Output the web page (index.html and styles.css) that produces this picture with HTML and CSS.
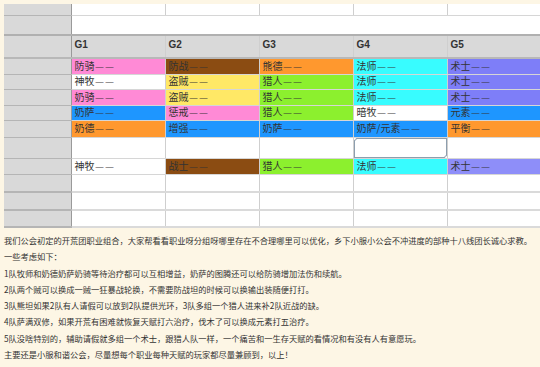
FILE: index.html
```html
<!DOCTYPE html>
<html lang="zh">
<head>
<meta charset="utf-8">
<link rel="stylesheet" href="styles.css">
</head>
<body>
<div class="page">
  <div class="sheet">
    <table class="grid">
      <colgroup>
        <col class="c-side"><col class="c-g"><col class="c-g"><col class="c-g"><col class="c-g"><col class="c-g">
      </colgroup>
      <tr class="r1"><td class="side"></td><td></td><td></td><td></td><td></td><td></td></tr>
      <tr class="r2"><td class="side"></td><td colspan="5"></td></tr>
      <tr class="rh"><td class="side"></td><th>G1</th><th>G2</th><th>G3</th><th>G4</th><th>G5</th></tr>
      <tr class="rc"><td class="side"></td><td class="pink">防骑<span class="dash">——</span></td><td class="brown">防战<span class="dash">——</span></td><td class="orange">熊德<span class="dash">——</span></td><td class="cyan">法师<span class="dash">——</span></td><td class="purple">术士<span class="dash">——</span></td></tr>
      <tr class="rc"><td class="side"></td><td>神牧<span class="dash">——</span></td><td class="yellow">盗贼<span class="dash">——</span></td><td class="green">猎人<span class="dash">——</span></td><td class="cyan">法师<span class="dash">——</span></td><td class="purple">术士<span class="dash">——</span></td></tr>
      <tr class="rc"><td class="side"></td><td class="pink">奶骑<span class="dash">——</span></td><td class="yellow">盗贼<span class="dash">——</span></td><td class="green">猎人<span class="dash">——</span></td><td class="cyan">法师<span class="dash">——</span></td><td class="purple">术士<span class="dash">——</span></td></tr>
      <tr class="rc"><td class="side"></td><td class="blue">奶萨<span class="dash">——</span></td><td class="pink">惩戒<span class="dash">——</span></td><td class="green">猎人<span class="dash">——</span></td><td>暗牧<span class="dash">——</span></td><td class="blue">元素<span class="dash">——</span></td></tr>
      <tr class="rc re"><td class="side"></td><td class="orange">奶德<span class="dash">——</span></td><td class="blue">增强<span class="dash">——</span></td><td class="blue">奶萨<span class="dash">——</span></td><td class="blue">奶萨/元素<span class="dash">——</span></td><td class="orange">平衡<span class="dash">——</span></td></tr>
      <tr class="rf"><td class="side"></td><td></td><td></td><td></td><td class="selected"><span class="handle tl"></span><span class="handle br"></span></td><td></td></tr>
      <tr class="rc"><td class="side"></td><td>神牧<span class="dash">——</span></td><td class="brown">战士<span class="dash">——</span></td><td class="green">猎人<span class="dash">——</span></td><td class="cyan">法师<span class="dash">——</span></td><td class="purple2">术士<span class="dash">——</span></td></tr>
      <tr class="rb1"><td class="side"></td><td></td><td></td><td></td><td></td><td></td></tr>
      <tr class="rb2"><td class="side"></td><td></td><td></td><td></td><td></td><td></td></tr>
      <tr class="rb2"><td class="side"></td><td></td><td></td><td></td><td></td><td></td></tr>
    </table>
  </div>
  <div class="notes">
    <p>我们公会初定的开荒团职业组合，大家帮看看职业呀分组呀哪里存在不合理哪里可以优化，乡下小服小公会不冲进度的部种十八线团长诚心求教。</p>
    <p>一些考虑如下：</p>
    <p>1队牧师和奶德奶萨奶骑等待治疗都可以互相增益，奶萨的图腾还可以给防骑增加法伤和续航。</p>
    <p>2队两个贼可以换成一贼一狂暴战轮换，不需要防战坦的时候可以换输出装随便打打。</p>
    <p>3队熊坦如果2队有人请假可以放到2队提供光环，3队多组一个猎人进来补2队近战的缺。</p>
    <p>4队萨满双修，如果开荒有困难就恢复天赋打六治疗，伐木了可以换成元素打五治疗。</p>
    <p>5队没啥特别的，辅助请假就多组一个术士，跟猎人队一样，一个痛苦和一生存天赋的看情况和有没有人有意愿玩。</p>
    <p>主要还是小服和谐公会，尽量想每个职业每种天赋的玩家都尽量兼顾到，以上！</p>
  </div>
</div>
</body>
</html>
```

FILE: styles.css
```css
html, body {
  margin: 0;
  padding: 0;
  background: #fdf6e5;
  overflow: hidden;
}
.page {
  width: 540px;
  height: 367px;
  padding: 4px 0 0 4px;
  box-sizing: border-box;
  font-family: "Noto Sans CJK SC", "Liberation Sans", sans-serif;
  color: #333;
}
.sheet {
  width: 536px;
  overflow: hidden;
}
.grid {
  border-collapse: collapse;
  table-layout: fixed;
  width: 537px;
  background: #fff;
}
.c-side { width: 67px; }
.c-g { width: 94px; }
.grid td, .grid th {
  padding: 0 0 0 3px;
  font-size: 10px;
  line-height: 12px;
  border-left: 1px solid #cfcfcf;
  border-right: 1px solid #cfcfcf;
  border-bottom: 1px solid #d6d6d6;
  white-space: nowrap;
  overflow: hidden;
  text-align: left;
  vertical-align: middle;
  color: #333;
}
.dash {
  display: inline-block;
  font-family: "Liberation Sans", sans-serif;
  font-size: 8px;
  letter-spacing: 2px;
  margin-left: 1px;
  vertical-align: 1px;
}
.grid td.side {
  background: #d9d9d9;
  border-left: none;
  border-right: 1px solid #9a9a9a;
  border-bottom: 1px solid #b5b5b5;
}
.r1 td { height: 11px; }
.r2 td { height: 18px; border-bottom: 2px solid #b0b0b0; }
.r2 td.side { border-bottom: 2px solid #b0b0b0; }
.rh th, .rh td { height: 18px; background: #d9d9d9; }
.rh th {
  font-family: "Liberation Sans", sans-serif;
  font-weight: bold;
  font-size: 10px;
  vertical-align: top;
  padding-top: 3px;
  border-left: 1px solid #f3efe0;
  border-bottom: 2px solid #b8b8b8;
}
.rh td.side { border-bottom: 2px solid #b8b8b8; }
.rc td { height: 14.5px; }
.re td { height: 15.5px; }
.rf td { height: 20.5px; }
.rb1 td { height: 16.5px; border-bottom: 2px solid #dadada; }
.rb2 td { height: 15.5px; border-bottom: 2px solid #dadada; }
.rb1 td.side, .rb2 td.side { border-bottom: 2px solid #b5b5b5; }

.pink { background: #ff8ad6; }
.brown { background: #8b4c12; }
.orange { background: #ff982e; }
.cyan { background: #38fcff; }
.purple { background: #7e7ef8; }
.purple2 { background: #8e8ef9; }
.yellow { background: #ffe866; }
.green { background: #8cf02e; }
.blue { background: #1e96ff; }

.grid td.selected {
  position: relative;
  box-shadow: inset 0 0 0 1px #8d9eae;
}
.handle {
  position: absolute;
  width: 4px;
  height: 4px;
  border: 1px solid #8d9eae;
  border-radius: 50%;
  background: #fff;
}
.handle.tl { left: -3px; top: -3px; }
.handle.br { right: -3px; bottom: -3px; }

.notes {
  margin-top: 4px;
  font-size: 8.25px;
  line-height: 16.3px;
  color: #333;
}
.notes p {
  margin: 0;
  white-space: nowrap;
}
```
